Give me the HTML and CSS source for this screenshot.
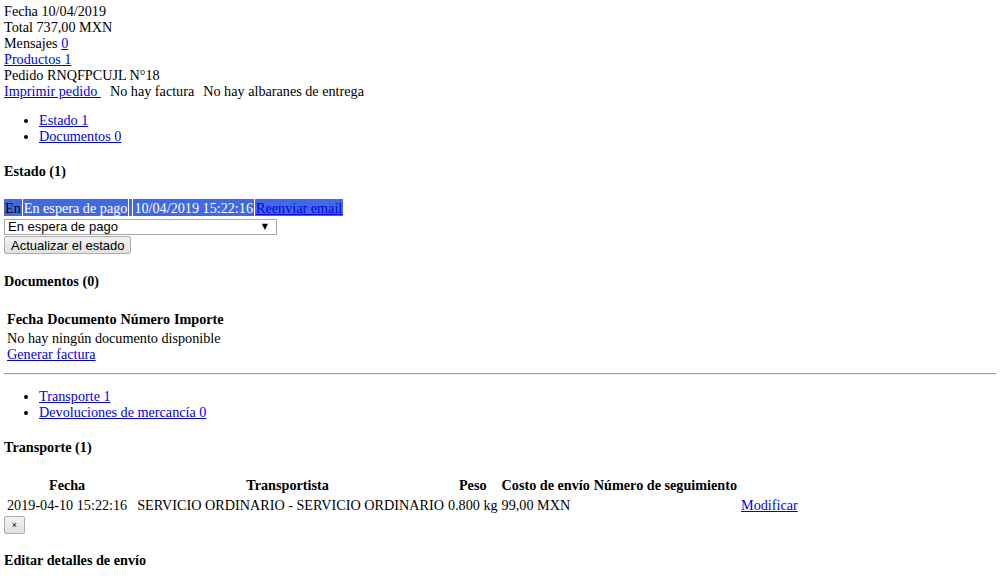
FILE: index.html
```html
<!DOCTYPE html>
<html>
<head>
    <title>Pedido RNQFPCUJL</title>
    <link rel="stylesheet" href="styles.css">
</head>
<body>
    <div id="order">
        <div>Fecha 10/04/2019</div>
        <div>Total 737,00 MXN</div>
        <div>Mensajes <a href="#">0</a></div>
        <div><a href="#">Productos 1</a></div>
        <div>Pedido RNQFPCUJL N°18</div>
        <div>
            <a href="#">Imprimir pedido&nbsp;</a><span class="gap">No hay factura</span><span class="gap">No hay albaranes de entrega</span>
        </div>
    </div>

    <ul>
        <li><a href="#">Estado 1</a></li>
        <li><a href="#">Documentos 0</a></li>
    </ul>

    <h4>Estado (1)</h4>
    <table class="status">
        <tr>
            <td class="dark">En</td>
            <td>En espera de pago</td>
            <td class="sep"></td>
            <td>10/04/2019 15:22:16</td>
            <td><a href="#">Reenviar email</a></td>
        </tr>
    </table>
    <div class="select-wrap">
        <select id="state">
            <option>En espera de pago</option>
            <option>Pago aceptado</option>
            <option>Enviado</option>
            <option>Cancelado</option>
        </select>
    </div>
    <button class="btn">Actualizar el estado</button>

    <h4>Documentos (0)</h4>
    <table class="docs">
        <tr>
            <th>Fecha</th>
            <th>Documento</th>
            <th>Número</th>
            <th>Importe</th>
        </tr>
        <tr>
            <td colspan="4">No hay ningún documento disponible<br><a href="#">Generar factura</a></td>
        </tr>
    </table>
    <hr>

    <ul>
        <li><a href="#">Transporte 1</a></li>
        <li><a href="#">Devoluciones de mercancía 0</a></li>
    </ul>

    <h4>Transporte (1)</h4>
    <table class="shipping">
        <tr>
            <th>Fecha</th>
            <th>Transportista</th>
            <th>Peso</th>
            <th>Costo de envío</th>
            <th>Número de seguimiento</th>
            <th></th>
        </tr>
        <tr>
            <td>2019-04-10 15:22:16</td>
            <td class="carrier">SERVICIO ORDINARIO - SERVICIO ORDINARIO</td>
            <td>0.800 kg</td>
            <td>99,00 MXN</td>
            <td></td>
            <td><a href="#">Modificar</a></td>
        </tr>
    </table>
    <button class="btn small">×</button>

    <h4>Editar detalles de envío</h4>
</body>
</html>
```

FILE: styles.css
```css
body {
    margin: 3px 4px 2px;
    font-family: "Liberation Serif", "Times New Roman", serif;
    font-size: 14.2px;
    line-height: 16px;
    color: #000;
    background-color: #fff;
}
a {
    color: #0000ee;
}
.gap {
    margin-left: 9px;
}
ul {
    margin: 13px 0 14px;
    padding-left: 35px;
}
h4 {
    font-size: 14.2px;
    margin: 18.6px 0;
}
table {
    border-spacing: 2px;
    margin-left: 0;
}
td, th {
    padding: 1px;
}
.status {
    border-spacing: 1px 2px;
    margin: 1px 0 0 -1px;
}
.status td {
    background-color: #4169e1;
    color: #fff;
    padding: 1px 1px 0;
    white-space: nowrap;
}
.status td.dark {
    color: #000;
}
.status td.sep {
    width: 1px;
}
.select-wrap {
    position: relative;
    width: 273px;
    margin-top: 1px;
}
.select-wrap::after {
    content: "▼";
    position: absolute;
    right: 9px;
    top: 3px;
    font-family: "DejaVu Sans", sans-serif;
    font-size: 8px;
    line-height: 10px;
    pointer-events: none;
}
select {
    -webkit-appearance: none;
    appearance: none;
    display: block;
    width: 273px;
    height: 16px;
    margin: 0;
    padding: 0 3px;
    border: 1px solid #a9a9a9;
    border-radius: 0;
    background-color: #fff;
    font-family: "Liberation Sans", Arial, sans-serif;
    font-size: 13px;
    line-height: 14px;
    color: #000;
}
.btn {
    display: block;
    height: 18px;
    margin: 1px 0 0;
    padding: 0 6px;
    border: 1px solid #adadad;
    border-radius: 2px;
    background: linear-gradient(#f2f2f2, #e1e1e1);
    font-family: "Liberation Sans", Arial, sans-serif;
    font-size: 13px;
    line-height: 15px;
    color: #000;
}
.btn.small {
    width: 21px;
    height: 18px;
    margin-top: 0;
    padding: 0;
    font-size: 9px;
    line-height: 16px;
}
.docs {
    margin-top: -1px;
}
.docs th {
    padding-top: 3px;
}
.docs td {
    padding-top: 0;
}
hr {
    margin: 8px -4px 7px;
    border: 0;
    border-top: 1px solid #a0a0a0;
    border-bottom: 1px solid #eee;
}
.shipping td.carrier {
    padding-left: 7px;
}
```
